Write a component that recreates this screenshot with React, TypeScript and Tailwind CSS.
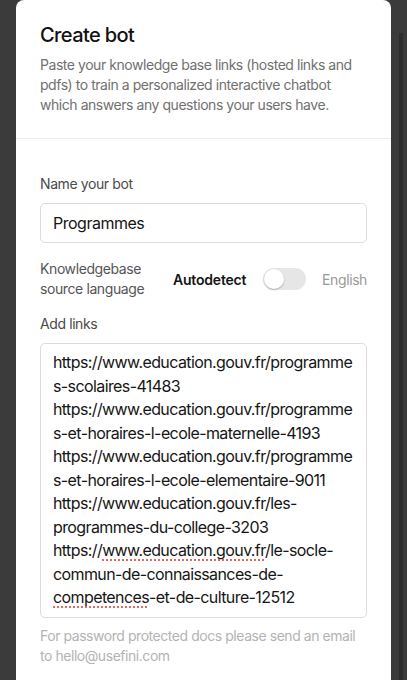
import React from "react";

const font = { fontFamily: "Inter, 'Noto Sans', 'Liberation Sans', sans-serif" };

const links: React.ReactNode[] = [
  "https://www.education.gouv.fr/programme",
  "s-scolaires-41483",
  "https://www.education.gouv.fr/programme",
  "s-et-horaires-l-ecole-maternelle-4193",
  "https://www.education.gouv.fr/programme",
  "s-et-horaires-l-ecole-elementaire-9011",
  "https://www.education.gouv.fr/les-",
  "programmes-du-college-3203",
  <>
    https://
    <span className="underline decoration-dotted decoration-[#e0453a] underline-offset-[4px]">www.education.gouv.fr</span>
    /le-socle-
  </>,
  "commun-de-connaissances-de-",
  <>
    <span className="underline decoration-dotted decoration-[#e0453a] underline-offset-[4px]">competences</span>
    -et-de-culture-12512
  </>,
];

export default function App() {
  return (
    <div className="min-h-[680px] h-[680px] w-[407px] bg-[#3b3b3b] flex overflow-hidden" style={font}>
      <div className="ml-4 w-[375px] bg-white rounded-t-[8px] flex flex-col">
        <div className="px-6 pt-[21px] pb-[23px] border-b border-[#ececec]">
          <h1 className="text-[20px] leading-[28px] text-[#111] font-medium tracking-[-0.6px]">Create bot</h1>
          <p className="mt-[6px] text-[14px] leading-[20px] text-[#707070] tracking-[-0.45px]">
            Paste your knowledge base links (hosted links and pdfs) to train a personalized interactive chatbot which answers any questions your users have.
          </p>
        </div>
        <div className="px-6 pt-[35px] flex flex-col tracking-[-0.4px]">
          <label className="text-[14px] leading-[20px] text-[#4a4a4a]">Name your bot</label>
          <div className="mt-[9px] h-[40px] rounded-[5px] border border-[#dcdcdc] flex items-center px-3 text-[16px] text-[#151515] tracking-[-0.5px]">
            Programmes
          </div>
          <div className="mt-4 flex items-center">
            <div className="text-[14px] leading-[20px] text-[#555] w-[133px]">
              Knowledgebase
              <br />
              source language
            </div>
            <span className="text-[14px] font-semibold text-[#151515] tracking-[-0.2px]">Autodetect</span>
            <div className="ml-[17px] w-[43px] h-[22px] rounded-full bg-[#e6e6e6] relative">
              <div className="absolute left-[1px] top-[1px] w-[20px] h-[20px] rounded-full bg-white shadow-[0_1px_2px_rgba(0,0,0,0.25)]" />
            </div>
            <span className="ml-auto text-[14px] text-[#9a9a9a]">English</span>
          </div>
          <label className="mt-[15px] text-[14px] leading-[20px] text-[#4a4a4a]">Add links</label>
          <div className="mt-[9px] rounded-[5px] border border-[#dcdcdc] px-3 pt-[7px] pb-[7px] text-[16px] leading-[23.5px] text-[#151515] tracking-[-0.6px]">
            {links.map((l, i) => (
              <div key={i} className="whitespace-nowrap">
                {l}
              </div>
            ))}
          </div>
          <p className="mt-2 text-[14px] leading-[20px] text-[#b3b3b3] tracking-[-0.45px]">
            For password protected docs please send an email to hello@usefini.com
          </p>
        </div>
      </div>
      <div className="ml-2 mt-[33px] w-[4px] h-[647px] bg-[#2d2d2d]" />
    </div>
  );
}
